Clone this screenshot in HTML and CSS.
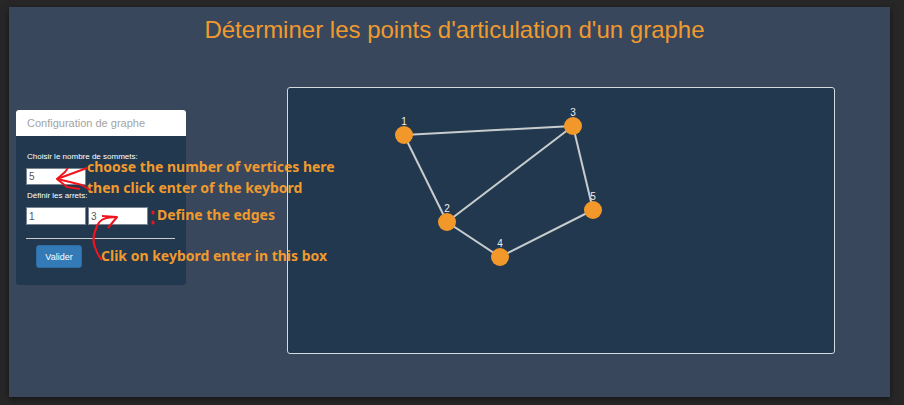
FILE: index.html
```html
<!DOCTYPE html>
<html lang="en">
<head>
  <meta charset="UTF-8" />
  <title>Points d'articulation</title>
  <link rel="stylesheet" href="styles.css">
</head>
<body>
  <div class="slide">
    <h1>Déterminer les points d'articulation d'un graphe</h1>
    <div class="content">
      <div class="panel">
        <div class="panel-heading">Configuration de graphe</div>
        <div class="panel-body">
          <label>Choisir le nombre de sommets:</label>
          <input class="field field-count" type="text" value="5" />
          <label class="edges-label">Définir les arrets:</label>
          <div class="edge-row">
            <input class="field" type="text" value="1" />
            <input class="field" type="text" value="3" />
          </div>
          <hr />
          <button>Valider</button>
        </div>
      </div>
      <div class="canvas">
        <svg width="546" height="265" viewBox="288 88 546 265">
          <g class="edges">
            <line x1="404" y1="135" x2="573" y2="126" />
            <line x1="404" y1="135" x2="447" y2="222" />
            <line x1="447" y1="222" x2="573" y2="126" />
            <line x1="573" y1="126" x2="593" y2="210" />
            <line x1="447" y1="222" x2="500" y2="257" />
            <line x1="500" y1="257" x2="593" y2="210" />
          </g>
          <g class="nodes">
            <circle cx="404" cy="135" r="9" />
            <circle cx="573" cy="126" r="9" />
            <circle cx="447" cy="222" r="9" />
            <circle cx="500" cy="257" r="9" />
            <circle cx="593" cy="210" r="9" />
          </g>
          <g class="labels">
            <text x="404" y="125">1</text>
            <text x="573" y="116">3</text>
            <text x="447" y="212">2</text>
            <text x="500" y="247">4</text>
            <text x="593" y="200">5</text>
          </g>
        </svg>
      </div>
    </div>
  </div>

  <!-- notes drawn over the screenshot -->
  <div class="note note-1">choose the number of vertices here</div>
  <div class="note note-2">then click enter of the keybord</div>
  <div class="note note-3">Define the edges</div>
  <div class="note note-4">Clik on keybord enter in this box</div>
  <svg class="scribble" width="904" height="405">
    <path d="M87 168 L68 175 L57 179 L70 182 L82 185 L90 190" />
    <path d="M57 179 L65 172 L68 168" />
    <path d="M57 179 L67 187 L80 189" />
    <path class="dot" d="M153 212 L153 213" />
    <path class="dot" d="M153 222 L153 223" />
    <path d="M102 216 L117 217 L108 228" />
    <path d="M117 217 C106 217 100 219 97 226 C93 235 93 243 95 247 C97 253 99 257 102 260" />
  </svg>
</body>
</html>
```
FILE: styles.css
```css
body {
  margin: 0;
  width: 904px;
  height: 405px;
  overflow: hidden;
  background-color: #272727;
  font-family: "Liberation Sans", Arial, sans-serif;
}
.slide {
  margin: 7px 0 0 9px;
  width: 881px;
  height: 390px;
  background-color: #38475c;
  box-shadow: 0 2px 6px rgba(0, 0, 0, 0.5);
}
h1 {
  margin: 0;
  padding: 8px 0 0 10px;
  font-size: 24px;
  font-weight: normal;
  line-height: 30px;
  text-align: center;
  color: #f09a2e;
}
.content {
  display: flex;
  align-items: flex-start;
  padding: 42px 0 0 7px;
}
.panel {
  width: 170px;
  margin-top: 23px;
  border-radius: 3px;
  background-color: #21384e;
}
.panel-heading {
  height: 26px;
  padding-left: 11px;
  box-sizing: border-box;
  line-height: 26px;
  font-size: 11px;
  color: #a3a3a3;
  background-color: #fff;
  border-radius: 3px 3px 0 0;
}
.panel-body {
  height: 149px;
  padding: 16px 10px 0;
  box-sizing: border-box;
  color: #fff;
  font-size: 8px;
}
label {
  display: block;
  padding-left: 1px;
  line-height: 9px;
  margin-bottom: 7px;
}
.edges-label {
  margin-top: 6px;
  margin-bottom: 7px;
}
.field {
  display: block;
  width: 60px;
  height: 18px;
  margin: 0;
  padding: 0 2px;
  box-sizing: border-box;
  border: 1px solid #7a8592;
  font-family: inherit;
  font-size: 10px;
  color: #555;
  background-color: #fff;
}
.field-count {
  height: 17px;
}
.edge-row {
  display: flex;
  gap: 2px;
}
hr {
  width: 149px;
  margin: 13px 0 6px;
  border: 0;
  border-top: 1px solid #ccc;
}
button {
  display: block;
  width: 46px;
  height: 23px;
  margin-left: 10px;
  padding: 0;
  border: 1px solid #2e6da4;
  border-radius: 3px;
  background-color: #337ab7;
  color: #fff;
  font-family: inherit;
  font-size: 9px;
}
.canvas {
  width: 548px;
  height: 267px;
  margin-left: 101px;
  box-sizing: border-box;
  border: 1px solid #d5d8dc;
  border-radius: 3px;
  background-color: #21384e;
}
.canvas svg {
  display: block;
}
.edges line {
  stroke: #c9ccce;
  stroke-width: 2;
}
.nodes circle {
  fill: #f2982b;
}
.labels text {
  fill: #f0f1f2;
  font-size: 10px;
  text-anchor: middle;
}
.note {
  position: absolute;
  font-family: "Noto Sans", sans-serif;
  font-size: 14px;
  font-weight: bold;
  line-height: 12px;
  color: #f09a2e;
  white-space: nowrap;
}
.note-1 { left: 87px; top: 161px; }
.note-2 { left: 87px; top: 182px; }
.note-3 { left: 157px; top: 209px; }
.note-4 { left: 101px; top: 250px; }
.scribble {
  position: absolute;
  left: 0;
  top: 0;
  pointer-events: none;
}
.scribble path {
  fill: none;
  stroke: #f0141e;
  stroke-width: 2;
  stroke-linejoin: round;
}
.scribble .dot {
  stroke-width: 3;
  stroke-linecap: round;
}
```
